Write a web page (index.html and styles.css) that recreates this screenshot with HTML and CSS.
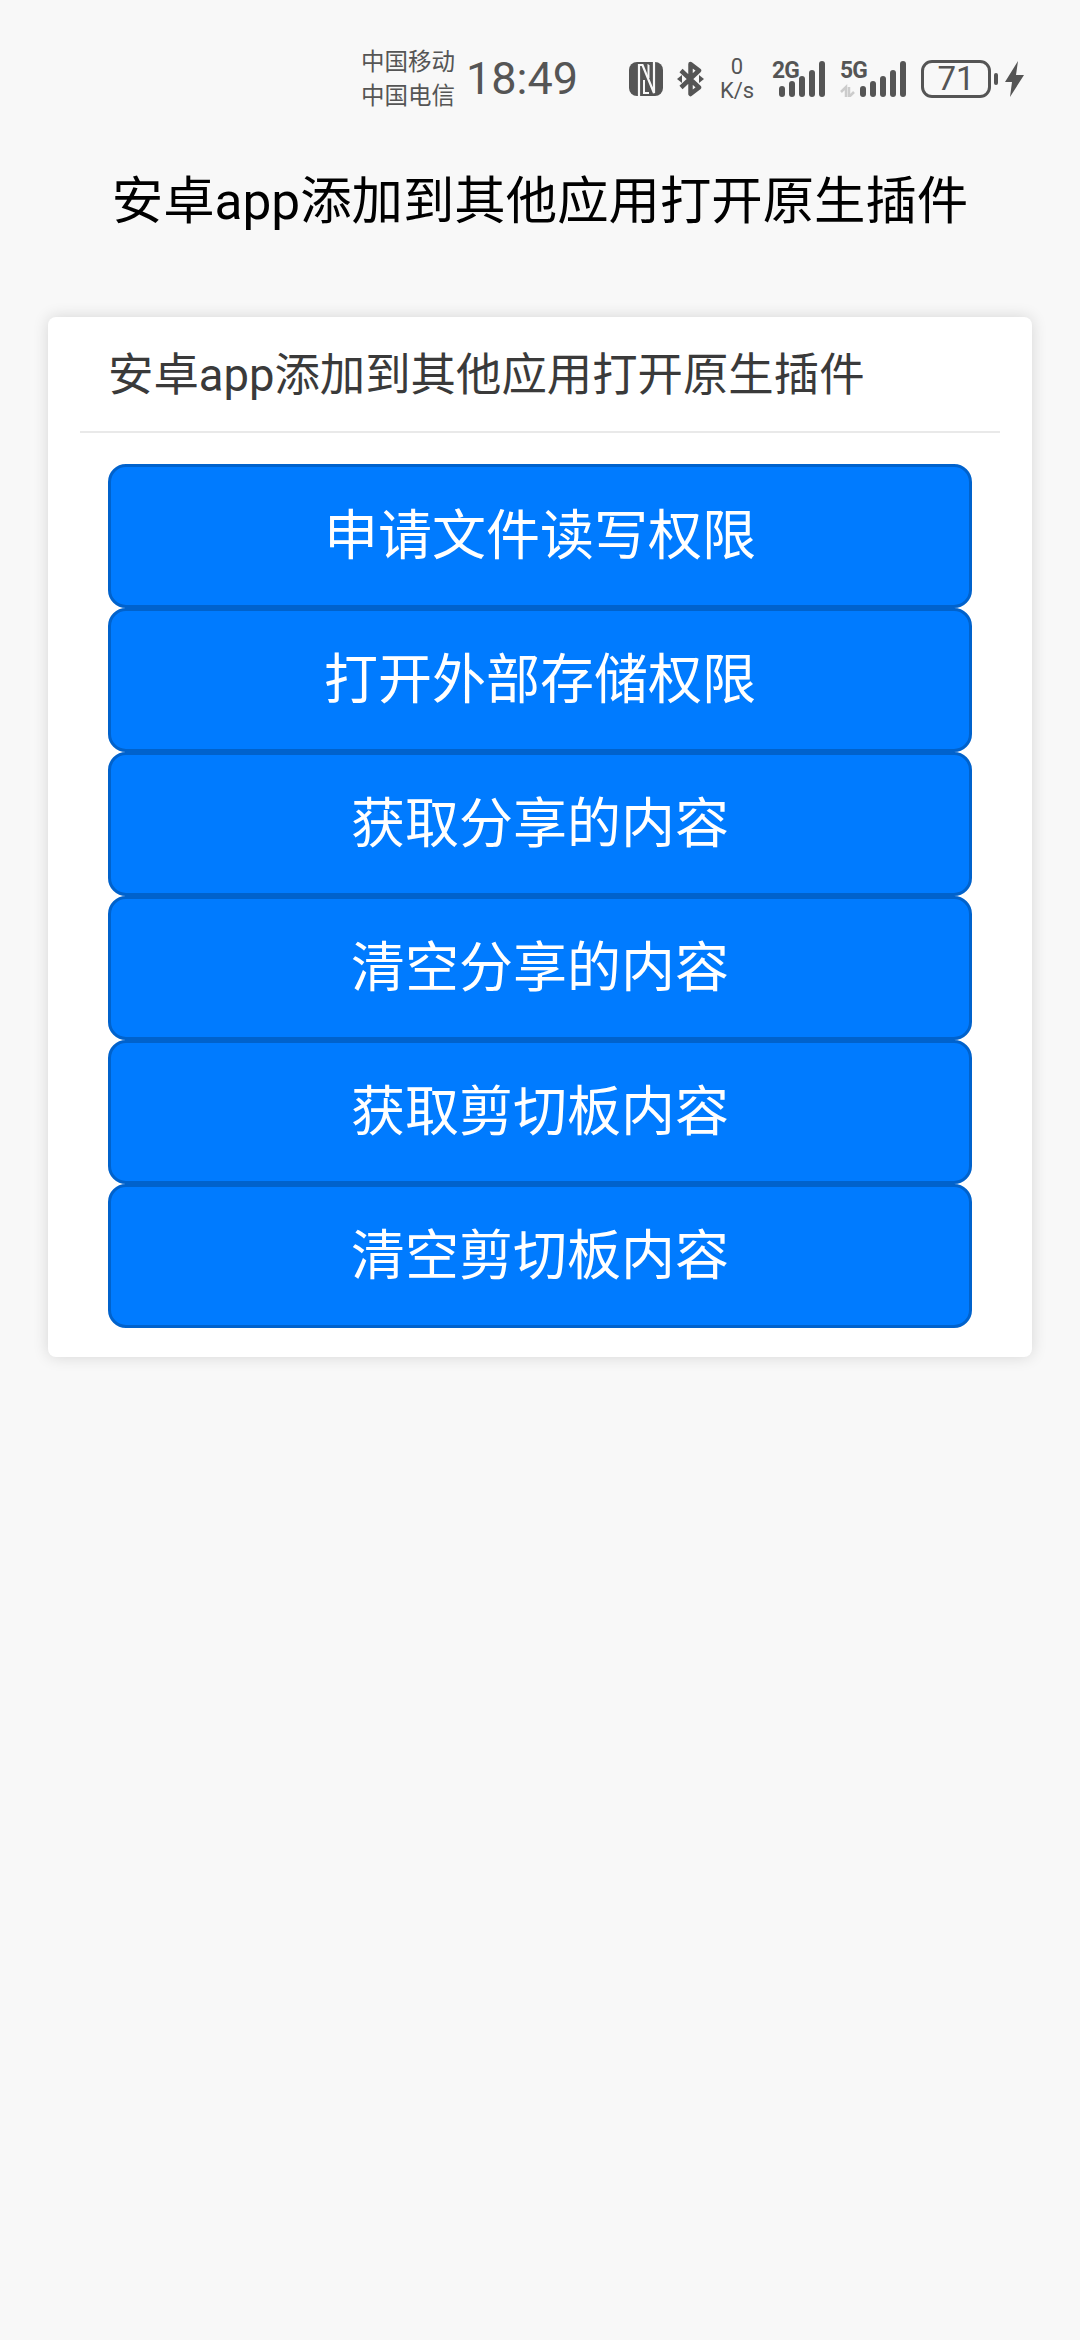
FILE: index.html
```html
<!DOCTYPE html>
<html lang="zh-CN">
<head>
    <meta charset="UTF-8">
    <meta name="viewport" content="width=device-width, initial-scale=1.0">
    <title>安卓app添加到其他应用打开原生插件</title>
    <link rel="stylesheet" href="styles.css">
</head>
<body>
    <!-- Status bar -->
    <div class="status-bar">
        <div class="carriers">
            <span>中国移动</span>
            <span>中国电信</span>
        </div>
        <div class="clock">18:49</div>
        <svg class="icon-nfc" width="34" height="34" viewBox="0 0 34 34">
            <rect width="34" height="34" rx="8" fill="#555"/>
            <path d="M10 34V3h3.500L25 31V0" fill="none" stroke="#f8f8f8" stroke-width="2.200"/>
            <path d="M15 18v13h5M19.500 3h-1M19.500 3v13" fill="none" stroke="#f8f8f8" stroke-width="2"/>
        </svg>
        <svg class="icon-bt" width="27" height="36" viewBox="0 0 27 36">
            <path d="M4 9.500L22 26.500L13.500 33V20M13.500 16V3L22 9.500L4 26.500" fill="none" stroke="#555" stroke-width="4.500" stroke-linejoin="round"/>
            <path d="M0 18l5-4v8zM27 18l-5-4v8z" fill="#555"/>
        </svg>
        <div class="net-speed">
            <span>0</span>
            <span>K/s</span>
        </div>
        <div class="signal signal-2g">
            <span class="signal-label">2G</span>
            <svg width="53" height="36" viewBox="0 0 53 36">
                <rect x="7" y="25" width="6" height="11" rx="3" fill="#555"/>
                <rect x="17" y="20" width="6" height="16" rx="3" fill="#555"/>
                <rect x="27" y="15" width="6" height="21" rx="3" fill="#555"/>
                <rect x="37" y="9" width="6" height="27" rx="3" fill="#555"/>
                <rect x="47" y="0" width="6" height="36" rx="3" fill="#555"/>
            </svg>
        </div>
        <div class="signal signal-5g">
            <span class="signal-label">5G</span>
            <svg width="66" height="36" viewBox="0 0 66 36">
                <path d="M6 36V26l-5 5M9 26v10l5-5" fill="none" stroke="#ccc" stroke-width="2.500"/>
                <rect x="20" y="25" width="6" height="11" rx="3" fill="#555"/>
                <rect x="30" y="20" width="6" height="16" rx="3" fill="#555"/>
                <rect x="40" y="15" width="6" height="21" rx="3" fill="#555"/>
                <rect x="50" y="9" width="6" height="27" rx="3" fill="#555"/>
                <rect x="60" y="0" width="6" height="36" rx="3" fill="#555"/>
            </svg>
        </div>
        <div class="battery">71</div>
        <div class="battery-nub"></div>
        <svg class="icon-bolt" width="19" height="36" viewBox="0 0 19 36">
            <path d="M13 0L0 21h7L5 36l14-22h-8z" fill="#555"/>
        </svg>
    </div>

    <h1 class="page-title">安卓app添加到其他应用打开原生插件</h1>

    <div class="card">
        <div class="card-header">安卓app添加到其他应用打开原生插件</div>
        <div class="card-body">
            <button class="btn">申请文件读写权限</button>
            <button class="btn">打开外部存储权限</button>
            <button class="btn">获取分享的内容</button>
            <button class="btn">清空分享的内容</button>
            <button class="btn">获取剪切板内容</button>
            <button class="btn">清空剪切板内容</button>
        </div>
    </div>
</body>
</html>
```

FILE: styles.css
```css
* {
    box-sizing: border-box;
}

body {
    margin: 0;
    min-height: 2340px;
    background-color: #f8f8f8;
    font-family: Roboto, "Noto Sans CJK SC", sans-serif;
}

/* Status bar */
.status-bar {
    display: flex;
    align-items: center;
    height: 80px;
    margin-top: 39px;
    padding-left: 361px;
    color: #555;
}

.carriers {
    display: flex;
    flex-direction: column;
    width: 105px;
    font-size: 23.500px;
    line-height: 34px;
}

.clock {
    width: 163px;
    font-size: 45px;
    line-height: 46px;
    color: #555;
}

.icon-nfc {
    margin-right: 14px;
}

.net-speed {
    display: flex;
    flex-direction: column;
    align-items: center;
    width: 36px;
    margin-left: 15px;
    font-size: 22px;
    line-height: 24px;
}

.signal {
    position: relative;
    display: flex;
}

.signal-2g {
    margin-left: 17px;
}

.signal-5g {
    margin-left: 15px;
}

.signal-label {
    position: absolute;
    top: -5px;
    left: 0;
    font-size: 24px;
    font-weight: 700;
    letter-spacing: -1px;
    transform: scaleX(0.95);
    transform-origin: left;
}

.battery {
    width: 70px;
    height: 38px;
    margin-left: 15px;
    border: 3px solid #555;
    border-radius: 11px;
    font-size: 33px;
    line-height: 32px;
    text-align: center;
}

.battery-nub {
    width: 4px;
    height: 12px;
    margin-left: 3px;
    border-radius: 2px;
    background-color: #555;
}

.icon-bolt {
    margin-left: 7px;
}

/* Page */
.page-title {
    margin: 48px 0 80px;
    font-size: 51.400px;
    font-weight: 400;
    line-height: 70px;
    text-align: center;
    color: #000;
}

.card {
    margin: 0 48px;
    padding: 0 32px;
    border-radius: 8px;
    background-color: #fff;
    box-shadow: 0 0 16px rgba(0, 0, 0, 0.14);
}

.card-header {
    height: 116px;
    padding: 27px 0 0 28px;
    border-bottom: 2px solid #e9e9e9;
    font-size: 45.400px;
    line-height: 64px;
    color: #3a3a3a;
}

.card-body {
    display: flex;
    flex-direction: column;
    padding: 31px 28px 29px;
}

.btn {
    height: 144px;
    padding: 0 0 9px;
    border: 3px solid #0062cc;
    border-radius: 18px;
    background-color: #007bff;
    font-family: inherit;
    font-size: 54px;
    color: #fff;
}
```
